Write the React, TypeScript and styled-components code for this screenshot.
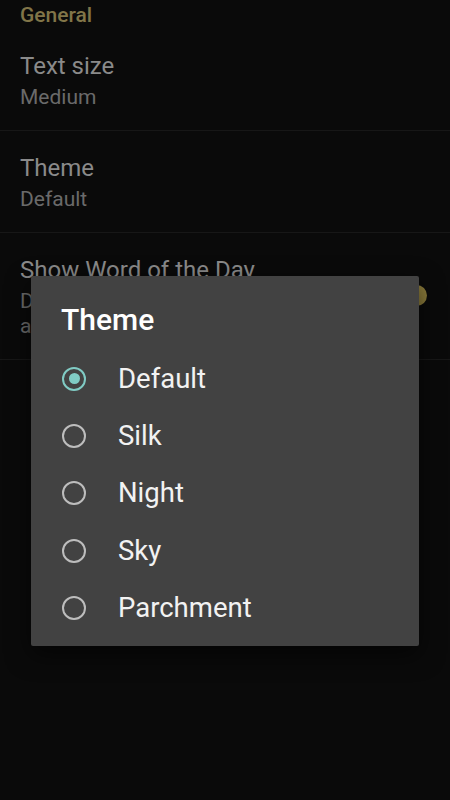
import styled, { createGlobalStyle } from "styled-components";

const GlobalStyle = createGlobalStyle`
  html, body {
    margin: 0;
    padding: 0;
    background: #0a0a0a;
  }
  body {
    font-family: Roboto, "Noto Sans", sans-serif;
    -webkit-font-smoothing: antialiased;
  }
`;

type Pref = {
  title: string;
  summary: string;
  toggle?: boolean;
};

const prefs: Pref[] = [
  { title: "Text size", summary: "Medium" },
  { title: "Theme", summary: "Default" },
  {
    title: "Show Word of the Day",
    summary: "Display a daily notification with\na new word to learn",
    toggle: true,
  },
];

const themes = ["Default", "Silk", "Night", "Sky", "Parchment"];

function App() {
  const selected = "Default";
  return (
    <>
      <GlobalStyle />
      <Screen>
        <Category>General</Category>
        {prefs.map((p) => (
          <Row key={p.title}>
            <RowText>
              <Title>{p.title}</Title>
              <Summary>{p.summary}</Summary>
            </RowText>
            {p.toggle && (
              <Switch>
                <Track />
                <Thumb />
              </Switch>
            )}
          </Row>
        ))}
      </Screen>
      <Overlay>
        <Dialog>
          <DialogTitle>Theme</DialogTitle>
          <Options>
            {themes.map((t) => (
              <Option key={t}>
                <Radio $checked={t === selected} />
                <OptionLabel>{t}</OptionLabel>
              </Option>
            ))}
          </Options>
        </Dialog>
      </Overlay>
    </>
  );
}
export default App;

const Screen = styled.div`
  min-height: 800px;
  background: #0a0a0a;
  display: flex;
  flex-direction: column;
`;

const Category = styled.div`
  padding: 3px 20px 2px;
  font-size: 21px;
  line-height: 24px;
  font-weight: 500;
  color: #817548;
`;

const Row = styled.div`
  display: flex;
  align-items: flex-start;
  padding: 23px 20px 20px;
  border-bottom: 1px solid #171717;
`;

const RowText = styled.div`
  flex: 1;
  display: flex;
  flex-direction: column;
  gap: 4px;
`;

const Title = styled.div`
  font-size: 24px;
  line-height: 29px;
  color: #8a8a8a;
`;

const Summary = styled.div`
  font-size: 21px;
  line-height: 25px;
  color: #6a6a6a;
  white-space: pre-line;
`;

const Switch = styled.div`
  position: relative;
  width: 46px;
  height: 24px;
  margin-top: 28px;
  margin-right: 3px;
`;

const Track = styled.div`
  position: absolute;
  left: 4px;
  right: 4px;
  top: 5px;
  height: 14px;
  border-radius: 7px;
  background: #4a4224;
`;

const Thumb = styled.div`
  position: absolute;
  right: 0;
  top: 1px;
  width: 21px;
  height: 21px;
  border-radius: 50%;
  background: #8a7a3a;
`;

const Overlay = styled.div`
  position: absolute;
  inset: 0;
  height: 800px;
  display: flex;
  justify-content: center;
  align-items: flex-start;
  padding-top: 276px;
  box-sizing: border-box;
`;

const Dialog = styled.div`
  width: 388px;
  background: #424242;
  border-radius: 2px;
  box-shadow: 0 8px 24px rgba(0, 0, 0, 0.6);
  padding: 27px 0 10px;
  box-sizing: border-box;
  display: flex;
  flex-direction: column;
`;

const DialogTitle = styled.div`
  padding: 0 30px;
  font-size: 30px;
  line-height: 34px;
  font-weight: 500;
  color: #ffffff;
`;

const Options = styled.div`
  margin-top: 13px;
  display: flex;
  flex-direction: column;
`;

const Option = styled.div`
  display: flex;
  align-items: center;
  height: 57.3px;
  padding: 0 31px;
  gap: 32px;
`;

const Radio = styled.span<{ $checked: boolean }>`
  width: 24px;
  height: 24px;
  box-sizing: border-box;
  border-radius: 50%;
  border: 2.5px solid ${(p) => (p.$checked ? "#80cbc4" : "#bdbdbd")};
  display: flex;
  align-items: center;
  justify-content: center;
  flex-shrink: 0;

  &::after {
    content: "";
    width: 11px;
    height: 11px;
    border-radius: 50%;
    background: #80cbc4;
    display: ${(p) => (p.$checked ? "block" : "none")};
  }
`;

const OptionLabel = styled.span`
  font-size: 27.5px;
  line-height: 32px;
  color: #f2f2f2;
`;
